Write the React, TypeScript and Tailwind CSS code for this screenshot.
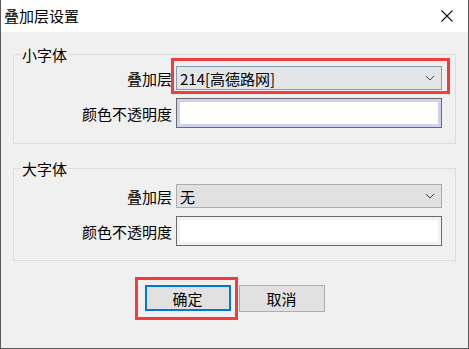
import React from "react";

function Chevron() {
  return (
    <svg width="10" height="6" viewBox="0 0 10 6" className="shrink-0">
      <path d="M1 1 L5 5 L9 1" fill="none" stroke="#444" strokeWidth="1" />
    </svg>
  );
}

export default function App() {
  return (
    <div className="w-[469px] h-[349px] flex flex-col border-x border-b border-[#5a5a5a] bg-[#f0f0f0] text-[15px] text-black font-['Noto_Sans_CJK_SC','Noto_Sans',sans-serif] overflow-hidden">
      <div className="h-[32px] shrink-0 bg-white flex items-center justify-between pl-[3px] pr-[15px]">
        <span className="leading-[18px]">叠加层设置</span>
        <svg width="12" height="12" viewBox="0 0 12 12">
          <path d="M0.5 0.5 L11.5 11.5 M11.5 0.5 L0.5 11.5" stroke="#111" strokeWidth="1.1" />
        </svg>
      </div>
      <div className="flex-1 flex flex-col px-[12px]">
        <fieldset className="mt-[14px] border border-[#dcdcdc] pt-[3px] pb-[15px] pr-[13px]">
          <legend className="ml-[7px] px-[1px] leading-[17px]">小字体</legend>
          <div className="flex flex-col gap-[8px]">
            <div className="flex items-center">
              <span className="w-[158px] text-right pr-0 leading-[17px]">叠加层</span>
              <div className="relative flex-1 ml-[4px]">
                <div className="h-[24px] border border-[#7f9db6] bg-[#e2e6e9] flex items-center justify-between pl-[3px] pr-[6px]">
                  <span className="leading-[17px]">214[高德路网]</span>
                  <Chevron />
                </div>
                <div className="absolute -top-[8px] -left-[5px] -right-[8px] -bottom-[4px] border-[3px] border-[#f43c3c] pointer-events-none" />
              </div>
            </div>
            <div className="flex items-center">
              <span className="w-[158px] text-right leading-[17px]">颜色不透明度</span>
              <div className="flex-1 ml-[4px] h-[30px] border border-[#6a6a6a]">
                <div className="h-full border-[3px] border-[#d0d0f0] bg-white" />
              </div>
            </div>
          </div>
        </fieldset>
        <fieldset className="mt-[16px] border border-[#dcdcdc] pt-[7px] pb-[14px] pr-[13px]">
          <legend className="ml-[7px] px-[1px] leading-[17px]">大字体</legend>
          <div className="flex flex-col gap-[8px]">
            <div className="flex items-center">
              <span className="w-[158px] text-right leading-[17px]">叠加层</span>
              <div className="flex-1 ml-[4px] h-[24px] border border-[#adadad] bg-[#e1e1e1] flex items-center justify-between pl-[3px] pr-[6px]">
                <span className="leading-[17px]">无</span>
                <Chevron />
              </div>
            </div>
            <div className="flex items-center">
              <span className="w-[158px] text-right leading-[17px]">颜色不透明度</span>
              <div className="flex-1 ml-[4px] h-[30px] border border-[#6a6a6a]">
                <div className="h-full border-[3px] border-[#f2f2f2] bg-white" />
              </div>
            </div>
          </div>
        </fieldset>
        <div className="mt-[24px] flex justify-center gap-[8px]">
          <div className="relative">
            <button className="w-[86px] h-[26px] border-2 border-[#0078d7] bg-[#e1e1e1] flex items-center justify-center leading-[17px]">
              确定
            </button>
            <div className="absolute -top-[8px] -left-[10px] -right-[7px] -bottom-[8px] border-[3px] border-[#f43c3c] pointer-events-none" />
          </div>
          <button className="w-[86px] h-[27px] border border-[#adadad] bg-[#e1e1e1] flex items-center justify-center leading-[17px]">
            取消
          </button>
        </div>
      </div>
    </div>
  );
}
